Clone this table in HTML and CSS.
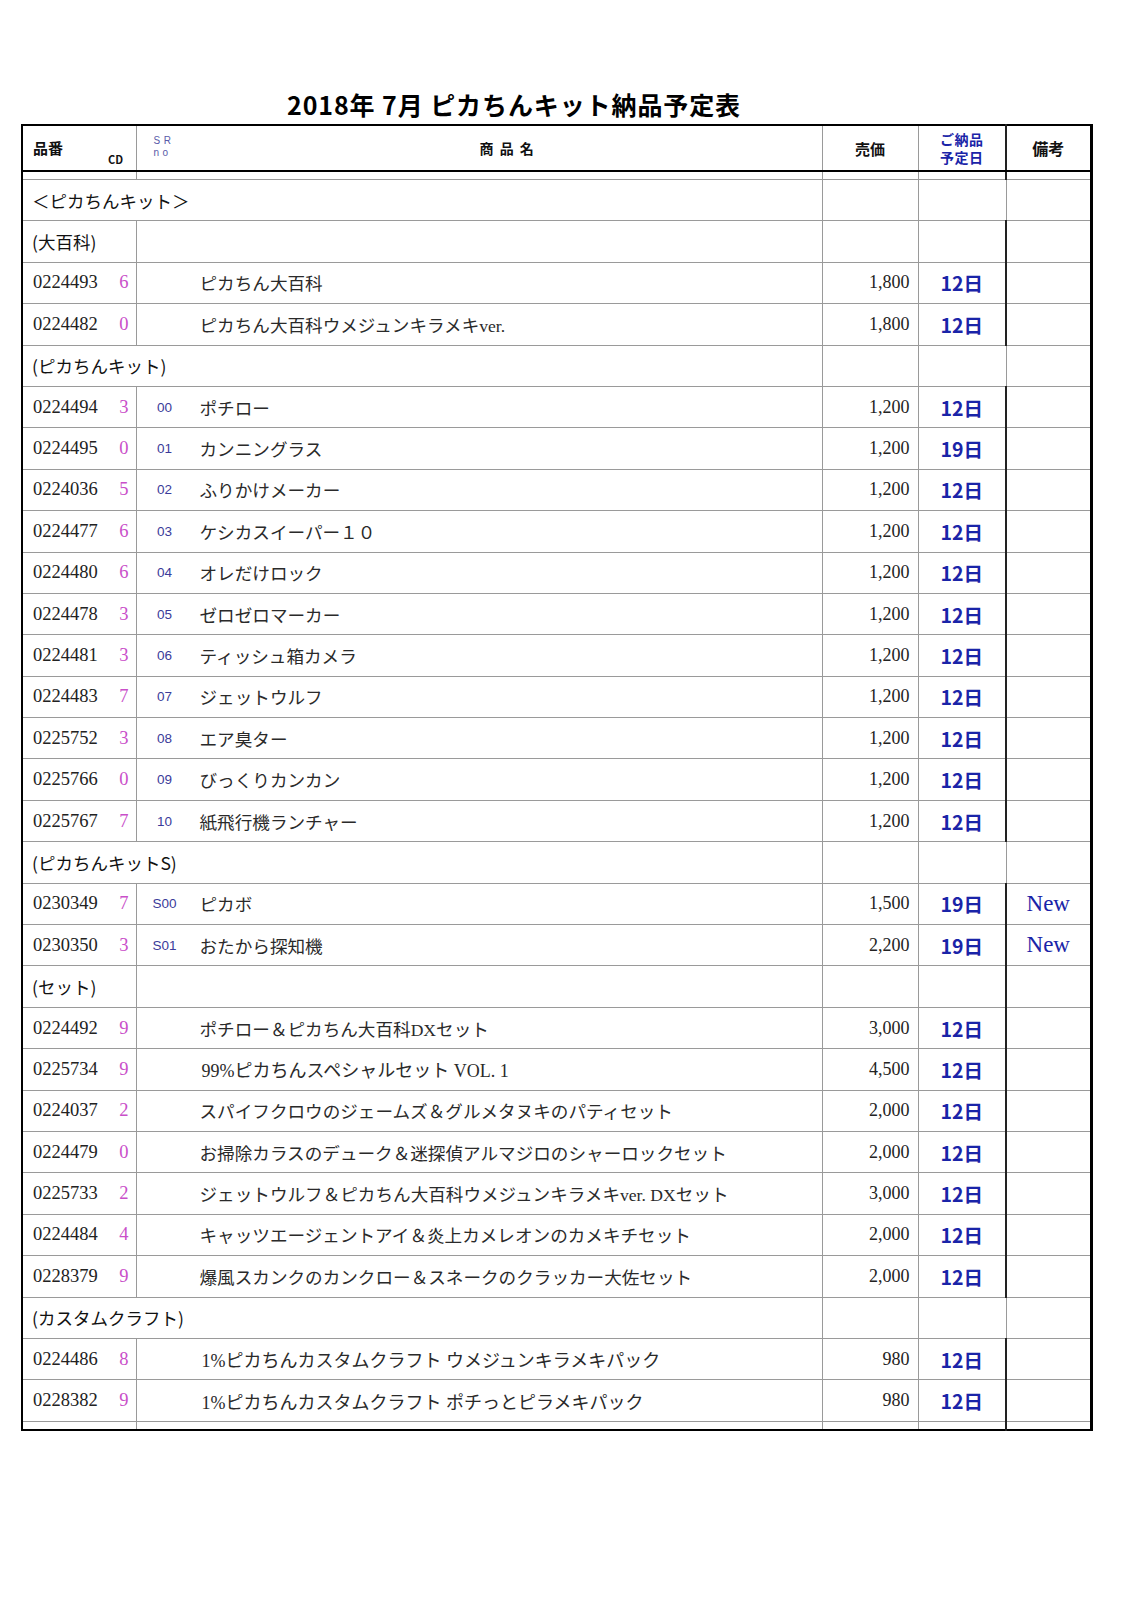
FILE: index.html
```html
<!DOCTYPE html>
<html lang="ja">
<head>
<meta charset="utf-8">
<link rel="stylesheet" href="styles.css">
</head>
<body>
<h1 class="title">2018年 7月 ピカちんキット納品予定表</h1>
<table class="sheet">
  <colgroup>
    <col class="c-code"><col class="c-name"><col class="c-price"><col class="c-date"><col class="c-note">
  </colgroup>
  <thead>
    <tr class="head">
      <th class="h-code"><div class="h-code-in"><span class="h-hinban">品番</span><span class="h-cd">CD</span></div></th>
      <th class="h-name"><div class="h-name-in"><span class="h-sr"><span class="h-sr-line">SR</span><span class="h-sr-line">no</span></span><span class="h-shohin">商 品 名</span></div></th>
      <th class="h-price">売価</th>
      <th class="h-date"><div class="h-date-in"><span class="h-date-line">ご納品</span><span class="h-date-line">予定日</span></div></th>
      <th class="h-note">備考</th>
    </tr>
  </thead>
  <tbody>
    <tr class="spacer"><td></td><td></td><td></td><td></td><td></td></tr>
    <tr class="row"><td colspan="2" class="sect">＜ピカちんキット＞</td><td></td><td></td><td></td></tr>
    <tr class="row"><td class="sect">(大百科)</td><td></td><td></td><td></td><td></td></tr>
    <tr class="row"><td><div class="code"><span>0224493</span><span class="cd">6</span></div></td><td><div class="nm"><span class="sr"></span><span>ピカちん大百科</span></div></td><td class="price">1,800</td><td class="date">12日</td><td></td></tr>
    <tr class="row"><td><div class="code"><span>0224482</span><span class="cd">0</span></div></td><td><div class="nm"><span class="sr"></span><span>ピカちん大百科ウメジュンキラメキver.</span></div></td><td class="price">1,800</td><td class="date">12日</td><td></td></tr>
    <tr class="row"><td colspan="2" class="sect">(ピカちんキット)</td><td></td><td></td><td></td></tr>
    <tr class="row"><td><div class="code"><span>0224494</span><span class="cd">3</span></div></td><td><div class="nm"><span class="sr">00</span><span>ポチロー</span></div></td><td class="price">1,200</td><td class="date">12日</td><td></td></tr>
    <tr class="row"><td><div class="code"><span>0224495</span><span class="cd">0</span></div></td><td><div class="nm"><span class="sr">01</span><span>カンニングラス</span></div></td><td class="price">1,200</td><td class="date">19日</td><td></td></tr>
    <tr class="row"><td><div class="code"><span>0224036</span><span class="cd">5</span></div></td><td><div class="nm"><span class="sr">02</span><span>ふりかけメーカー</span></div></td><td class="price">1,200</td><td class="date">12日</td><td></td></tr>
    <tr class="row"><td><div class="code"><span>0224477</span><span class="cd">6</span></div></td><td><div class="nm"><span class="sr">03</span><span>ケシカスイーパー１０</span></div></td><td class="price">1,200</td><td class="date">12日</td><td></td></tr>
    <tr class="row"><td><div class="code"><span>0224480</span><span class="cd">6</span></div></td><td><div class="nm"><span class="sr">04</span><span>オレだけロック</span></div></td><td class="price">1,200</td><td class="date">12日</td><td></td></tr>
    <tr class="row"><td><div class="code"><span>0224478</span><span class="cd">3</span></div></td><td><div class="nm"><span class="sr">05</span><span>ゼロゼロマーカー</span></div></td><td class="price">1,200</td><td class="date">12日</td><td></td></tr>
    <tr class="row"><td><div class="code"><span>0224481</span><span class="cd">3</span></div></td><td><div class="nm"><span class="sr">06</span><span>ティッシュ箱カメラ</span></div></td><td class="price">1,200</td><td class="date">12日</td><td></td></tr>
    <tr class="row"><td><div class="code"><span>0224483</span><span class="cd">7</span></div></td><td><div class="nm"><span class="sr">07</span><span>ジェットウルフ</span></div></td><td class="price">1,200</td><td class="date">12日</td><td></td></tr>
    <tr class="row"><td><div class="code"><span>0225752</span><span class="cd">3</span></div></td><td><div class="nm"><span class="sr">08</span><span>エア臭ター</span></div></td><td class="price">1,200</td><td class="date">12日</td><td></td></tr>
    <tr class="row"><td><div class="code"><span>0225766</span><span class="cd">0</span></div></td><td><div class="nm"><span class="sr">09</span><span>びっくりカンカン</span></div></td><td class="price">1,200</td><td class="date">12日</td><td></td></tr>
    <tr class="row"><td><div class="code"><span>0225767</span><span class="cd">7</span></div></td><td><div class="nm"><span class="sr">10</span><span>紙飛行機ランチャー</span></div></td><td class="price">1,200</td><td class="date">12日</td><td></td></tr>
    <tr class="row"><td colspan="2" class="sect">(ピカちんキットS)</td><td></td><td></td><td></td></tr>
    <tr class="row"><td><div class="code"><span>0230349</span><span class="cd">7</span></div></td><td><div class="nm"><span class="sr">S00</span><span>ピカボ</span></div></td><td class="price">1,500</td><td class="date">19日</td><td class="note">New</td></tr>
    <tr class="row"><td><div class="code"><span>0230350</span><span class="cd">3</span></div></td><td><div class="nm"><span class="sr">S01</span><span>おたから探知機</span></div></td><td class="price">2,200</td><td class="date">19日</td><td class="note">New</td></tr>
    <tr class="row"><td class="sect">(セット)</td><td></td><td></td><td></td><td></td></tr>
    <tr class="row"><td><div class="code"><span>0224492</span><span class="cd">9</span></div></td><td><div class="nm"><span class="sr"></span><span>ポチロー＆ピカちん大百科DXセット</span></div></td><td class="price">3,000</td><td class="date">12日</td><td></td></tr>
    <tr class="row"><td><div class="code"><span>0225734</span><span class="cd">9</span></div></td><td><div class="nm"><span class="sr"></span><span class="wide">99%ピカちんスペシャルセット VOL. 1</span></div></td><td class="price">4,500</td><td class="date">12日</td><td></td></tr>
    <tr class="row"><td><div class="code"><span>0224037</span><span class="cd">2</span></div></td><td><div class="nm"><span class="sr"></span><span>スパイフクロウのジェームズ＆グルメタヌキのパティセット</span></div></td><td class="price">2,000</td><td class="date">12日</td><td></td></tr>
    <tr class="row"><td><div class="code"><span>0224479</span><span class="cd">0</span></div></td><td><div class="nm"><span class="sr"></span><span>お掃除カラスのデューク＆迷探偵アルマジロのシャーロックセット</span></div></td><td class="price">2,000</td><td class="date">12日</td><td></td></tr>
    <tr class="row"><td><div class="code"><span>0225733</span><span class="cd">2</span></div></td><td><div class="nm"><span class="sr"></span><span>ジェットウルフ＆ピカちん大百科ウメジュンキラメキver. DXセット</span></div></td><td class="price">3,000</td><td class="date">12日</td><td></td></tr>
    <tr class="row"><td><div class="code"><span>0224484</span><span class="cd">4</span></div></td><td><div class="nm"><span class="sr"></span><span>キャッツエージェントアイ＆炎上カメレオンのカメキチセット</span></div></td><td class="price">2,000</td><td class="date">12日</td><td></td></tr>
    <tr class="row"><td><div class="code"><span>0228379</span><span class="cd">9</span></div></td><td><div class="nm"><span class="sr"></span><span>爆風スカンクのカンクロー＆スネークのクラッカー大佐セット</span></div></td><td class="price">2,000</td><td class="date">12日</td><td></td></tr>
    <tr class="row"><td colspan="2" class="sect">(カスタムクラフト)</td><td></td><td></td><td></td></tr>
    <tr class="row"><td><div class="code"><span>0224486</span><span class="cd">8</span></div></td><td><div class="nm"><span class="sr"></span><span class="wide">1%ピカちんカスタムクラフト ウメジュンキラメキパック</span></div></td><td class="price">980</td><td class="date">12日</td><td></td></tr>
    <tr class="row"><td><div class="code"><span>0228382</span><span class="cd">9</span></div></td><td><div class="nm"><span class="sr"></span><span class="wide">1%ピカちんカスタムクラフト ポチっとピラメキパック</span></div></td><td class="price">980</td><td class="date">12日</td><td></td></tr>
    <tr class="spacer"><td></td><td></td><td></td><td></td><td></td></tr>
  </tbody>
</table>
</body>
</html>
```
FILE: styles.css
```css
html, body {
  margin: 0;
  padding: 0;
  background: #fff;
}
body {
  padding: 89px 0 0 21px;
  font-family: "Liberation Serif", "Noto Sans CJK JP", serif;
  color: #1a1a1a;
}
.title {
  margin: 0;
  height: 35px;
  padding-left: 266px;
  font-family: "Noto Sans CJK JP", sans-serif;
  font-weight: 700;
  font-size: 25px;
  line-height: 30px;
  letter-spacing: 0.9px;
  color: #000;
}
.sheet {
  border-collapse: collapse;
  table-layout: fixed;
  width: 1069px;
  border: 2px solid #000;
  border-right-width: 3px;
}
.c-code { width: 114px; }
.c-name { width: 686px; }
.c-price { width: 96px; }
.c-date { width: 88px; }
.c-note { width: 85px; }

.sheet th, .sheet td {
  padding: 0;
  border: 1px solid #9a9a9a;
  vertical-align: middle;
}
.sheet td:nth-child(5), .sheet th:nth-child(5) {
  border-left: 2px solid #222;
}
.sheet td:nth-last-child(1) { border-right: 3px solid #000; }

.head th {
  height: 44px;
  border-bottom: 2px solid #000;
  font-family: "Noto Sans CJK JP", sans-serif;
  font-weight: 700;
  font-size: 15px;
  color: #111;
}
.h-code-in {
  position: relative;
  height: 44px;
}
.h-hinban {
  position: absolute;
  left: 10px;
  top: 12px;
  line-height: 20px;
}
.h-cd {
  position: absolute;
  left: 85px;
  top: 27px;
  font-size: 11px;
  line-height: 12px;
}
.h-name-in {
  display: flex;
  align-items: center;
  height: 44px;
}
.h-sr {
  display: flex;
  flex-direction: column;
  gap: 1px;
  width: 40px;
  margin-left: 17px;
  padding-bottom: 4px;
}
.h-sr-line {
  display: block;
  font-family: "Liberation Sans", sans-serif;
  font-weight: 400;
  font-size: 10px;
  line-height: 11px;
  letter-spacing: 3.5px;
  color: #5a5aa8;
  text-align: left;
}
.h-shohin {
  margin-left: 286px;
  font-size: 14px;
  letter-spacing: 1.5px;
}
.h-price { text-align: center; }
.h-date-in {
  display: flex;
  flex-direction: column;
  align-items: center;
  gap: 1px;
}
.h-date-line {
  display: block;
  color: #1a24a8;
  font-size: 14px;
  line-height: 17px;
  letter-spacing: 0.5px;
}
.h-note {
  text-align: center;
  color: #1a24a8;
  font-size: 16px !important;
}

.spacer td { height: 7px; }
.row td { height: 40.4px; }

.sect {
  padding-left: 9px !important;
  font-family: "Noto Sans CJK JP", sans-serif;
  font-size: 17.5px;
  white-space: nowrap;
  color: #111;
}
.code {
  display: flex;
  justify-content: space-between;
  padding: 0 7px 0 10px;
  font-size: 18.5px;
  color: #222;
}
.cd { color: #c94fc9; }
.nm {
  display: flex;
  align-items: center;
  font-size: 17.6px;
  white-space: nowrap;
  color: #2a2a2a;
}
.sr {
  width: 56px;
  text-align: center;
  font-family: "Liberation Sans", sans-serif;
  font-size: 13.5px;
  color: #3b3b9a;
}
.nm span + span { margin-left: 7px; }
.wide { font-size: 18px; padding-left: 2px; }
.price {
  text-align: right;
  padding-right: 8px !important;
  font-size: 18px;
  color: #222;
}
.date {
  text-align: center;
  font-family: "Noto Sans CJK JP", sans-serif;
  font-weight: 700;
  font-size: 19.5px;
  color: #1a24a8;
}
.note {
  text-align: center;
  font-size: 23px;
  color: #1a24a8;
}
```
